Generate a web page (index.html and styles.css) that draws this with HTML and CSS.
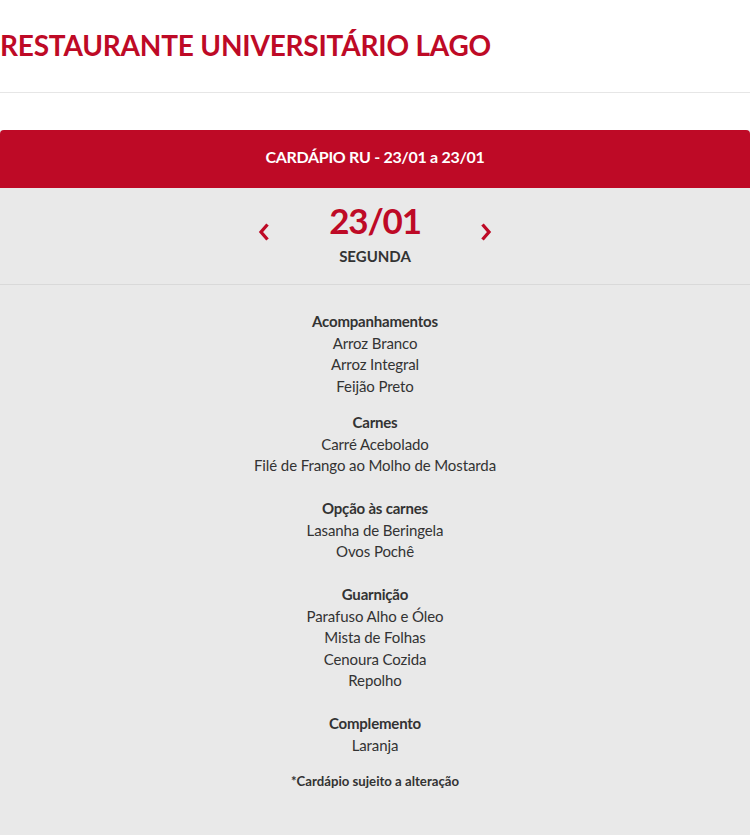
FILE: index.html
```html
<!DOCTYPE html>
<html lang="pt-BR">
<head>
<meta charset="utf-8">
<link rel="stylesheet" href="styles.css">
</head>
<body>
<header class="site-header">
  <h1 class="site-title">RESTAURANTE UNIVERSITÁRIO LAGO</h1>
</header>
<main class="menu-card">
  <div class="menu-bar">CARDÁPIO RU - 23/01 a 23/01</div>
  <div class="day-nav">
    <button class="nav-btn" aria-label="anterior">
      <svg width="12" height="18" viewBox="0 0 12 18"><polyline points="9.5,1.5 3,9 9.5,16.5" fill="none" stroke="#be0a26" stroke-width="3.3" stroke-linecap="butt" stroke-linejoin="miter"/></svg>
    </button>
    <div class="day">
      <div class="day-date">23/01</div>
      <div class="day-name">SEGUNDA</div>
    </div>
    <button class="nav-btn" aria-label="próximo">
      <svg width="12" height="18" viewBox="0 0 12 18"><polyline points="2.5,1.5 9,9 2.5,16.5" fill="none" stroke="#be0a26" stroke-width="3.3" stroke-linecap="butt" stroke-linejoin="miter"/></svg>
    </button>
  </div>
  <div class="menu-body">
    <section class="group">
      <div class="group-title">Acompanhamentos</div>
      <div>Arroz Branco</div>
      <div>Arroz Integral</div>
      <div>Feijão Preto</div>
    </section>
    <section class="group group-wide">
      <div class="group-title">Carnes</div>
      <div>Carré Acebolado</div>
      <div>Filé de Frango ao Molho de Mostarda</div>
    </section>
    <section class="group group-wide">
      <div class="group-title">Opção às carnes</div>
      <div>Lasanha de Beringela</div>
      <div>Ovos Pochê</div>
    </section>
    <section class="group group-wide">
      <div class="group-title">Guarnição</div>
      <div>Parafuso Alho e Óleo</div>
      <div>Mista de Folhas</div>
      <div>Cenoura Cozida</div>
      <div>Repolho</div>
    </section>
    <section class="group">
      <div class="group-title">Complemento</div>
      <div>Laranja</div>
    </section>
    <p class="note">*Cardápio sujeito a alteração</p>
  </div>
</main>
</body>
</html>
```
FILE: styles.css
```css
html, body {
  margin: 0;
  padding: 0;
  background: #ffffff;
  font-family: Lato, "Open Sans", sans-serif;
  color: #333333;
}

.site-header {
  height: 92px;
  border-bottom: 1px solid #e6e6e6;
  display: flex;
  align-items: center;
}

.site-title {
  margin: 0;
  font-size: 28px;
  font-weight: 700;
  color: #be0a26;
  letter-spacing: -0.2px;
  line-height: 1;
  padding-bottom: 2px;
}

.menu-card {
  margin-top: 37px;
  background: #e9e9e9;
  min-height: 706px;
}

.menu-bar {
  height: 58px;
  box-sizing: border-box;
  padding-bottom: 5px;
  background: #be0a26;
  border-radius: 4px 4px 0 0;
  color: #ffffff;
  font-weight: 700;
  font-size: 16px;
  letter-spacing: -0.3px;
  display: flex;
  align-items: center;
  justify-content: center;
}

.day-nav {
  height: 96px;
  border-bottom: 1px solid #d9d9d9;
  display: flex;
  align-items: center;
  justify-content: center;
  gap: 30px;
}

.nav-btn {
  background: none;
  border: 0;
  padding: 0;
  margin-top: -8px;
  width: 12px;
  height: 18px;
  display: flex;
}

.day {
  display: flex;
  flex-direction: column;
  align-items: center;
  width: 150px;
  margin-top: -6px;
}

.day-date {
  font-size: 35px;
  font-weight: 700;
  color: #be0a26;
  line-height: 38px;
  letter-spacing: -1.2px;
}

.day-name {
  font-size: 15px;
  font-weight: 700;
  color: #333333;
  line-height: 20px;
  margin-top: 7px;
}

.menu-body {
  padding-top: 26px;
  text-align: center;
  font-size: 15px;
  line-height: 21.5px;
  letter-spacing: -0.1px;
}

.group {
  margin-bottom: 15px;
}

.group-wide {
  margin-bottom: 21.5px;
}

.group-title {
  font-weight: 700;
  letter-spacing: -0.2px;
}

.note {
  margin: 0;
  font-size: 13.2px;
  font-weight: 700;
  letter-spacing: 0;
}
```
